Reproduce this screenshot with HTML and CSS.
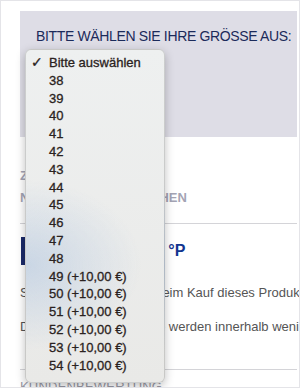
FILE: index.html
```html
<!DOCTYPE html>
<html lang="de">
<head>
<meta charset="utf-8">
<link rel="stylesheet" href="styles.css">
</head>
<body>
<div class="page">
  <div class="content">
    <section class="size-panel">
      <h2 class="size-title">BITTE WÄHLEN SIE IHRE GRÖSSE AUS:</h2>
    </section>
    <div class="tabs">
      <div class="tab-line">ZUBEHÖR</div>
      <div class="tab-line">NICHT MEHR ÜBERSEHEN</div>
    </div>
    <section class="promo">
      <div class="promo-head">
        <span class="promo-bar"></span>
        <h3 class="promo-title">IHR VORTEIL: 10 °P</h3>
      </div>
      <p class="promo-text">Sie erhalten 10 Punkte beim Kauf dieses Produktes.</p>
      <p class="promo-text">Die gesammelten Punkte werden innerhalb weniger Tage gutgeschrieben.</p>
    </section>
    <div class="reviews">KUNDENBEWERTUNG</div>
  </div>

  <ul class="dropdown">
    <li class="opt selected"><span class="check">✓</span>Bitte auswählen</li>
    <li class="opt">38</li>
    <li class="opt">39</li>
    <li class="opt">40</li>
    <li class="opt">41</li>
    <li class="opt">42</li>
    <li class="opt">43</li>
    <li class="opt">44</li>
    <li class="opt">45</li>
    <li class="opt">46</li>
    <li class="opt">47</li>
    <li class="opt">48</li>
    <li class="opt">49 (+10,00 €)</li>
    <li class="opt">50 (+10,00 €)</li>
    <li class="opt">51 (+10,00 €)</li>
    <li class="opt">52 (+10,00 €)</li>
    <li class="opt">53 (+10,00 €)</li>
    <li class="opt">54 (+10,00 €)</li>
  </ul>
</div>
</body>
</html>
```
FILE: styles.css
```css
* { box-sizing: border-box; }
html, body { margin: 0; padding: 0; background: #fff; }
body { font-family: "Liberation Sans", Arial, sans-serif; }

.page {
  position: relative;
  width: 300px;
  height: 388px;
  overflow: hidden;
  border: 1px solid #e4e4e8;
  background: #fff;
}

.content {
  padding: 10px 2px 0 19px;
}

.size-panel {
  height: 126px;
  background: #dedde6;
  padding: 17px 0 0 16px;
}
.size-title {
  margin: 0;
  font-size: 14px;
  font-weight: normal;
  color: #1b2a5a;
  letter-spacing: -0.35px;
  line-height: 16px;
  white-space: nowrap;
}

.tabs {
  padding: 28px 0 14px 0;
  border-bottom: 1px solid #d4d4d8;
  font-size: 13px;
  font-weight: bold;
  color: #a4a4b4;
  line-height: 22px;
}
.tab-line { white-space: nowrap; }

.promo {
  padding: 13px 0 0 0;
  border-bottom: 1px solid #d4d4d8;
  height: 146px;
}
.promo-head {
  display: flex;
  align-items: center;
  gap: 10px;
  height: 28px;
}
.promo-bar {
  width: 4px;
  height: 28px;
  background: #1b2a6a;
  margin-left: 1px;
}
.promo-title {
  margin: 0;
  font-size: 16px;
  font-weight: bold;
  color: #12358f;
  white-space: nowrap;
}
.promo-text {
  margin: 20px 0 0 0;
  font-size: 13px;
  color: #555;
  line-height: 16px;
  white-space: nowrap;
}
.promo-text + .promo-text { margin-top: 18px; }

.reviews {
  padding-top: 9px;
  font-size: 13px;
  color: #9a9aa6;
  letter-spacing: 0.2px;
}

.dropdown {
  position: absolute;
  left: 24px;
  top: 48px;
  width: 140px;
  height: 334px;
  margin: 0;
  padding: 4px 0 0 0;
  list-style: none;
  border-radius: 6px;
  border: 1px solid rgba(0,0,0,0.14);
  background:
    radial-gradient(ellipse 115px 85px at 0 215px, rgba(180,200,225,0.6), rgba(180,200,225,0) 100%),
    linear-gradient(#eef0f0, #e9e9e7);
  box-shadow: 0 3px 10px rgba(0,0,0,0.25);
}
.opt {
  position: relative;
  padding-left: 23px;
  font-size: 13px;
  line-height: 17.8px;
  color: #2a2220;
  white-space: nowrap;
  -webkit-text-stroke: 0.3px currentColor;
}
.check {
  position: absolute;
  left: 5px;
  top: 0;
  font-family: "DejaVu Sans", sans-serif;
  font-weight: bold;
  font-size: 14px;
}
```
